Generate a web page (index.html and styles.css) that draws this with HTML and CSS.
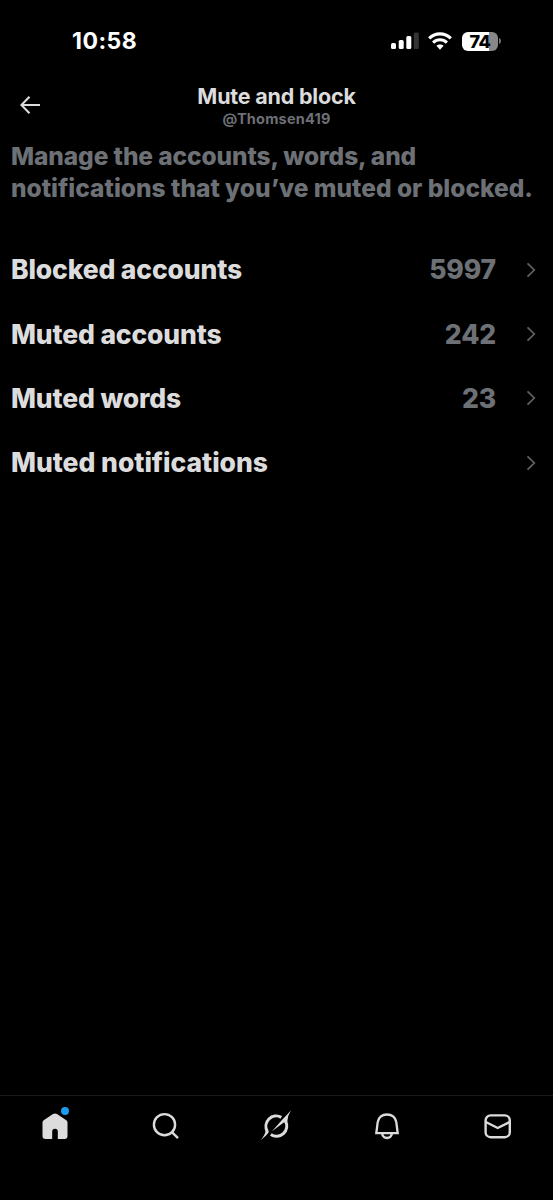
FILE: index.html
```html
<!DOCTYPE html>
<html lang="en">
<head>
<meta charset="utf-8">
<title>Mute and block</title>
<link rel="stylesheet" href="styles.css">
</head>
<body>
<div class="screen">
  <div class="status">
    <span class="clock">10:58</span>
    <div class="status-icons">
      <svg class="signal" width="28" height="18" viewBox="0 0 28 18">
        <rect x="0" y="11" width="5" height="6" rx="1.5" fill="#fff"/>
        <rect x="7.7" y="8" width="5" height="9" rx="1.5" fill="#fff"/>
        <rect x="15.3" y="4" width="5" height="13" rx="1.5" fill="#fff"/>
        <rect x="22.8" y="0.5" width="5" height="16.5" rx="1.5" fill="#333"/>
      </svg>
      <svg class="wifi" width="24" height="18" viewBox="0 0 24 18" fill="none" stroke="#fff" stroke-width="3.1">
        <path d="M1.2 6.4C7.3.3 16.7.3 22.8 6.4"/>
        <path d="M5.1 10.6c3.9-3.8 9.9-3.8 13.8 0"/>
        <path d="M12 17.7l-3.6-3.9c2-1.8 5.2-1.8 7.2 0z" fill="#fff" stroke="none"/>
      </svg>
      <div class="battery"><span>74</span></div>
      <svg class="battery-tip" width="3" height="8" viewBox="0 0 3 8"><path d="M0 1c2.6.6 2.6 5.4 0 6z" fill="#777"/></svg>
    </div>
  </div>
  <header class="topbar">
    <svg class="back" width="22" height="20" viewBox="0 0 22 20" fill="none" stroke="#dcdcdc" stroke-width="2.1"><path d="M9.5 1.8L1.4 10l8.1 8.2M1.5 10H20"/></svg>
    <div class="heading">
      <h1>Mute and block</h1>
      <p>@Thomsen419</p>
    </div>
    <span></span>
  </header>
  <p class="intro">Manage the accounts, words, and<br><span class="intro-end">notifications that you’ve muted or blocked.</span></p>
  <ul class="list">
    <li><span class="label">Blocked accounts</span><span class="count">5997</span><svg width="10" height="16" viewBox="0 0 10 16"><path d="M1.5 1.3L8.3 8l-6.8 6.7"/></svg></li>
    <li><span class="label">Muted accounts</span><span class="count">242</span><svg width="10" height="16" viewBox="0 0 10 16"><path d="M1.5 1.3L8.3 8l-6.8 6.7"/></svg></li>
    <li><span class="label">Muted words</span><span class="count">23</span><svg width="10" height="16" viewBox="0 0 10 16"><path d="M1.5 1.3L8.3 8l-6.8 6.7"/></svg></li>
    <li><span class="label wide">Muted notifications</span><svg width="10" height="16" viewBox="0 0 10 16"><path d="M1.5 1.3L8.3 8l-6.8 6.7"/></svg></li>
  </ul>
  <nav class="tabs">
    <div class="tab home">
      <svg width="32" height="32" viewBox="0 0 32 32"><path d="M14 3.1Q16 1.8 18 3.1L27.3 9.2Q28.5 10 28.5 11.5V25Q28.5 28 25.5 28H18.8V20.6a2.8 2.8 0 0 0-5.6 0V28H6.5Q3.5 28 3.5 25V11.5Q3.5 10 4.7 9.2z" fill="#dcdcdc"/></svg>
      <i class="dot"></i>
    </div>
    <div class="tab"><svg width="32" height="32" viewBox="0 0 32 32" fill="none" stroke="#dcdcdc" stroke-width="2.4"><circle cx="14.5" cy="13.7" r="10.6"/><path d="M21.9 21.1l6.1 6"/></svg></div>
    <div class="tab"><svg width="32" height="32" viewBox="0 0 32 32"><path d="M21.3 6.4A10.2 10.2 0 0 0 7.3 20.3M10.8 23.4A10.2 10.2 0 0 0 25.6 10.2" fill="none" stroke="#dcdcdc" stroke-width="3"/><path d="M31-.7Q27.4 5 27.2 11L23.8 11.6L12 20.2L22.4 8.6Q28 3 31-.7z" fill="#dcdcdc"/><path d="M.3 29.5Q5 24.5 5.8 19L8.9 20.3Q9 22.6.3 29.5z" fill="#dcdcdc"/></svg></div>
    <div class="tab"><svg width="32" height="32" viewBox="0 0 32 32" fill="none" stroke="#dcdcdc" stroke-width="2.3"><path d="M5.3 22.2L6.7 11.1C7.4 6.2 11.2 3.5 16 3.5s8.6 2.7 9.3 7.6l1.4 11.1zM11.1 22.8c.6 2.8 2.4 4.2 4.9 4.2s4.3-1.4 4.9-4.2"/></svg></div>
    <div class="tab"><svg width="32" height="32" viewBox="0 0 32 32" fill="none" stroke="#dcdcdc" stroke-width="2.4"><rect x="3.6" y="4.4" width="24.2" height="21.8" rx="5"/><path d="M3.8 11l11.9 6L27.6 11"/></svg></div>
  </nav>
</div>
</body>
</html>
```
FILE: styles.css
```css
* { box-sizing: border-box; margin: 0; padding: 0; }
body { background: #000; font-family: Inter, "Noto Sans", sans-serif; font-weight: 800; color: #dcdcdc; }
.screen { width: 553px; height: 1200px; display: flex; flex-direction: column; overflow: hidden; }
.status { height: 82px; padding: 0 51px 0 72px; display: flex; justify-content: space-between; align-items: center; }
.clock { font: 700 23px/26px Inter, sans-serif; color: #fff; letter-spacing: .5px; }
.status-icons { display: flex; align-items: center; }
.wifi { margin: 0 10px 0 9px; }
.battery { width: 36px; height: 19px; border-radius: 6px; background: linear-gradient(90deg, #fff 27px, #888 27px); color: #000; text-align: center; font: 800 18px/19px Inter, sans-serif; letter-spacing: -.5px; }
.battery-tip { margin-left: 1px; }
.topbar { height: 58px; padding: 0 20px; display: grid; grid-template-columns: 1fr auto 1fr; }
.back { margin-top: 13px; }
.heading { text-align: center; }
.heading h1 { font-size: 21.5px; line-height: 28px; font-weight: 700; letter-spacing: -.2px; }
.heading p { font-size: 14.5px; line-height: 18px; font-weight: 700; color: #6d7176; letter-spacing: .2px; }
.intro { height: 97px; padding-left: 11px; font-size: 24.5px; line-height: 32px; color: #6d7176; white-space: nowrap; letter-spacing: -.1px; }
.intro-end { letter-spacing: 0; }
.list { list-style: none; flex: 1; }
.list li { height: 64.4px; padding: 0 17px 0 11px; display: flex; align-items: center; font-size: 26.5px; line-height: 36px; letter-spacing: -.15px; }
.label { flex: 1; }
.wide { letter-spacing: -.03px; }
.count { color: #6d7176; margin-right: 30px; }
.list svg { fill: none; stroke: #606366; stroke-width: 1.7; margin-top: 1px; }
.tabs { height: 105px; border-top: 1px solid #191919; padding-top: 15px; display: grid; grid-template-columns: repeat(5, 1fr); }
.tab { height: 32px; display: flex; justify-content: center; }
.tab svg { overflow: visible; }
.home { position: relative; }
.dot { position: absolute; left: 61px; top: -4px; width: 8px; height: 8px; border-radius: 50%; background: #1d9bf0; }
```
